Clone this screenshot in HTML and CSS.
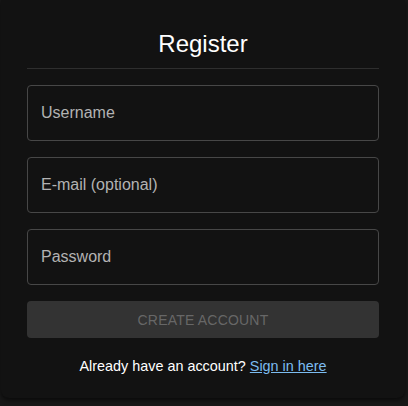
FILE: index.html
```html
<!DOCTYPE html>
<html>
<head>
<meta charset="utf-8">
<link rel="stylesheet" href="styles.css">
</head>
<body>
<div class="card">
  <h1 class="title">Register</h1>
  <hr class="divider">
  <form class="form">
    <div class="field"><input class="input" type="text" placeholder="Username"></div>
    <div class="field"><input class="input" type="email" placeholder="E-mail (optional)"></div>
    <div class="field"><input class="input" type="password" placeholder="Password"></div>
    <button class="btn" type="button" disabled>Create account</button>
  </form>
  <p class="footer">Already have an account? <a class="link" href="#">Sign in here</a></p>
</div>
</body>
</html>
```

FILE: styles.css
```css
html, body {
  margin: 0;
  padding: 0;
}
body {
  background: #171717;
  font-family: "Liberation Sans", Arial, sans-serif;
  width: 408px;
  height: 406px;
  overflow: hidden;
}
.card {
  box-sizing: border-box;
  margin: 0 3px 0 1px;
  height: 398px;
  background: #121212;
  border-radius: 0 0 8px 8px;
  box-shadow: 0 2px 4px rgba(0,0,0,0.6);
  padding: 28px 26px 0 26px;
}
.title {
  margin: 0;
  height: 32px;
  line-height: 32px;
  font-size: 24px;
  font-weight: 400;
  color: #ffffff;
  text-align: center;
}
.divider {
  margin: 8px 0 0 0;
  border: 0;
  height: 1px;
  background: #2e2e2e;
}
.form {
  display: flex;
  flex-direction: column;
  gap: 16px;
  margin-top: 16px;
}
.field {
  display: flex;
}
.input {
  flex: 1;
  box-sizing: border-box;
  height: 56px;
  background: transparent;
  border: 1px solid #474747;
  border-radius: 4px;
  padding: 0 13px;
  font-family: "Liberation Sans", Arial, sans-serif;
  font-size: 16px;
  color: #fff;
  outline: none;
}
.input::placeholder {
  color: #b3b3b3;
  opacity: 1;
}
.btn {
  box-sizing: border-box;
  height: 37px;
  border: 0;
  border-radius: 4px;
  background: #333333;
  color: #676767;
  font-family: "Liberation Sans", Arial, sans-serif;
  font-size: 14px;
  text-transform: uppercase;
  letter-spacing: 0.2px;
}
.footer {
  margin: 19px 0 0 0;
  text-align: center;
  font-size: 14.4px;
  line-height: 18px;
  color: #ffffff;
}
.link {
  color: #7cbcf0;
  text-decoration: underline;
}
```
